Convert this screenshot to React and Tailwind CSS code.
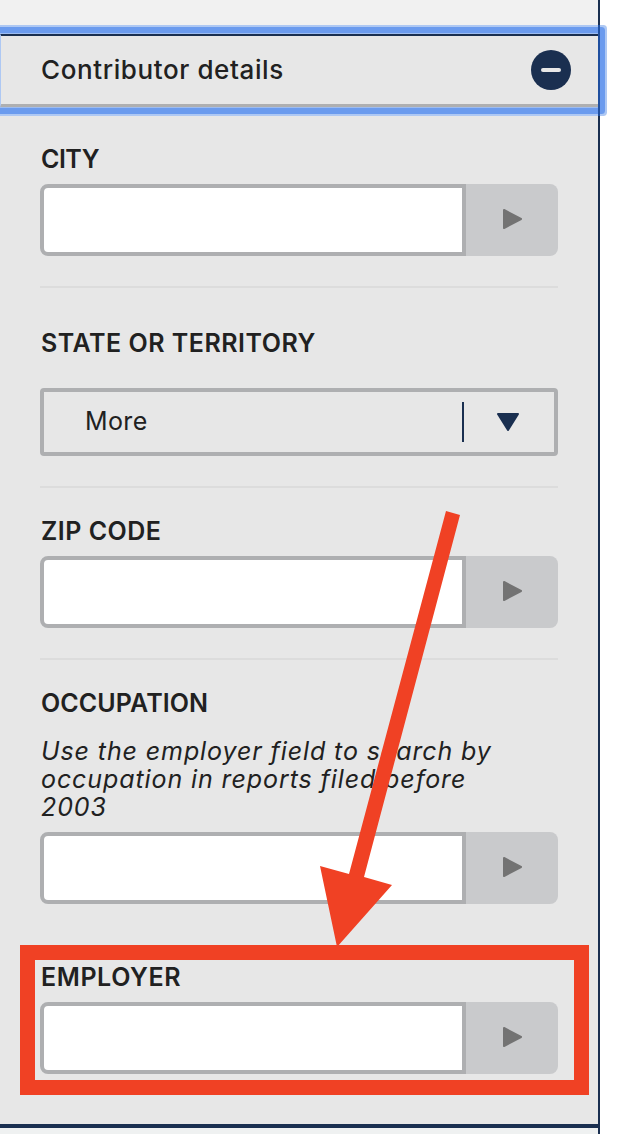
const FONT = "font-['Inter','Liberation_Sans',sans-serif]";

function Play() {
  return (
    <svg width="22" height="22" viewBox="0 0 22 22" className="block mb-[3px]">
      <path d="M3 2 L20 11 L3 20 Z" fill="#737373" stroke="#737373" strokeWidth="2" strokeLinejoin="round" />
    </svg>
  );
}

function Label({ children, className = "" }) {
  return (
    <div className={`pl-[1px] text-[25px] leading-[30px] font-semibold text-[#212121] ${className}`}>
      {children}
    </div>
  );
}

function TextField() {
  return (
    <div className="flex h-[72px] w-[518px]">
      <div className="w-[426px] bg-white border-[4px] border-[#aeafb1] rounded-l-[8px]"></div>
      <div className="flex-1 bg-[#c9cacc] rounded-r-[8px] flex items-center justify-center">
        <Play />
      </div>
    </div>
  );
}

function Divider() {
  return <div className="h-[2px] w-[518px] bg-[#dcdcdc]"></div>;
}

export default function App() {
  return (
    <div className={`relative w-[626px] h-[1134px] bg-white overflow-hidden ${FONT}`}>
      <div className="w-[600px] h-[1134px] bg-[#e7e7e7] flex flex-col border-r-[2px] border-r-[#1a2f50]">
        <div className="h-[34px] shrink-0 bg-[#f1f1f1]"></div>
        <div className="relative w-[600px] h-[73px] shrink-0 bg-[#e7e7e7] border-t-[2px] border-b-[3px] border-l-[1px] border-t-[#1a2f50] border-b-[#aeafb1] border-l-[#aec8f3] flex items-center justify-between pl-[40px] pr-[29px] rounded-[1px] shadow-[-2px_0_0_1px_#9dbcf0,-2px_0_0_7px_#6b9bee,-2px_0_0_9px_#aec8f3]">
          <div className="text-[26px] leading-[32px] font-medium text-[#212121] tracking-[0.6px]">Contributor details</div>
          <div className="w-[40px] h-[40px] rounded-full bg-[#1a2f50] flex items-center justify-center">
            <div className="w-[20px] h-[4px] rounded-full bg-[#e7e7e7]"></div>
          </div>
        </div>

        <div className="flex-1 flex flex-col pl-[40px] pt-[37px]">
          <Label className="h-[40px] tracking-[-0.5px]">CITY</Label>
          <TextField />
          <div className="mt-[30px]"><Divider /></div>

          <Label className="mt-[40px] h-[60px] tracking-[0.5px]">STATE OR TERRITORY</Label>
          <div className="w-[518px] h-[68px] border-[4px] border-[#aeafb1] rounded-[4px] flex items-center">
            <div className="w-[418px] pl-[41px] text-[25px] text-[#212121] tracking-[0.4px]">More</div>
            <div className="w-[2px] h-[40px] bg-[#1a2f50]"></div>
            <svg width="24" height="20" viewBox="0 0 24 20" className="ml-[32px] block">
              <path d="M2 2 H22 L12 18 Z" fill="#1a2f50" stroke="#1a2f50" strokeWidth="2" strokeLinejoin="round" />
            </svg>
          </div>
          <div className="mt-[30px]"><Divider /></div>

          <Label className="mt-[28px] h-[40px] tracking-[0.5px]">ZIP CODE</Label>
          <TextField />
          <div className="mt-[30px]"><Divider /></div>

          <Label className="mt-[28px] tracking-[0.1px]">OCCUPATION</Label>
          <div className="mt-[19px] h-[84px] w-[470px] pl-[1px] text-[25px] leading-[28px] italic text-[#212121] tracking-[0.9px]">
            Use the employer field to search by occupation in reports filed before 2003
          </div>
          <div className="mt-[11px]"><TextField /></div>

          <Label className="mt-[58px] h-[40px] tracking-[0.6px]">EMPLOYER</Label>
          <TextField />
        </div>

        <div className="h-[4px] shrink-0 bg-[#1a2f50]"></div>
        <div className="h-[6px] shrink-0 bg-[#eff1f1]"></div>
      </div>

      {/* panel edge where it crosses the focus ring */}
      <div className="absolute left-[598px] top-[25px] w-[2px] h-[91px] bg-[#1f4f9f]"></div>

      {/* annotation: red box */}
      <div className="absolute left-[20px] top-[945px] w-[569px] h-[150px] border-[15px] border-[#f04124]"></div>

      {/* annotation: red arrow */}
      <svg className="absolute left-0 top-0 pointer-events-none" width="626" height="1134" viewBox="0 0 626 1134">
        <path d="M446 511 L460 515 L364 877 L392 885 L337 947 L320 866 L349 874 Z" fill="#f04124" />
      </svg>
    </div>
  );
}
